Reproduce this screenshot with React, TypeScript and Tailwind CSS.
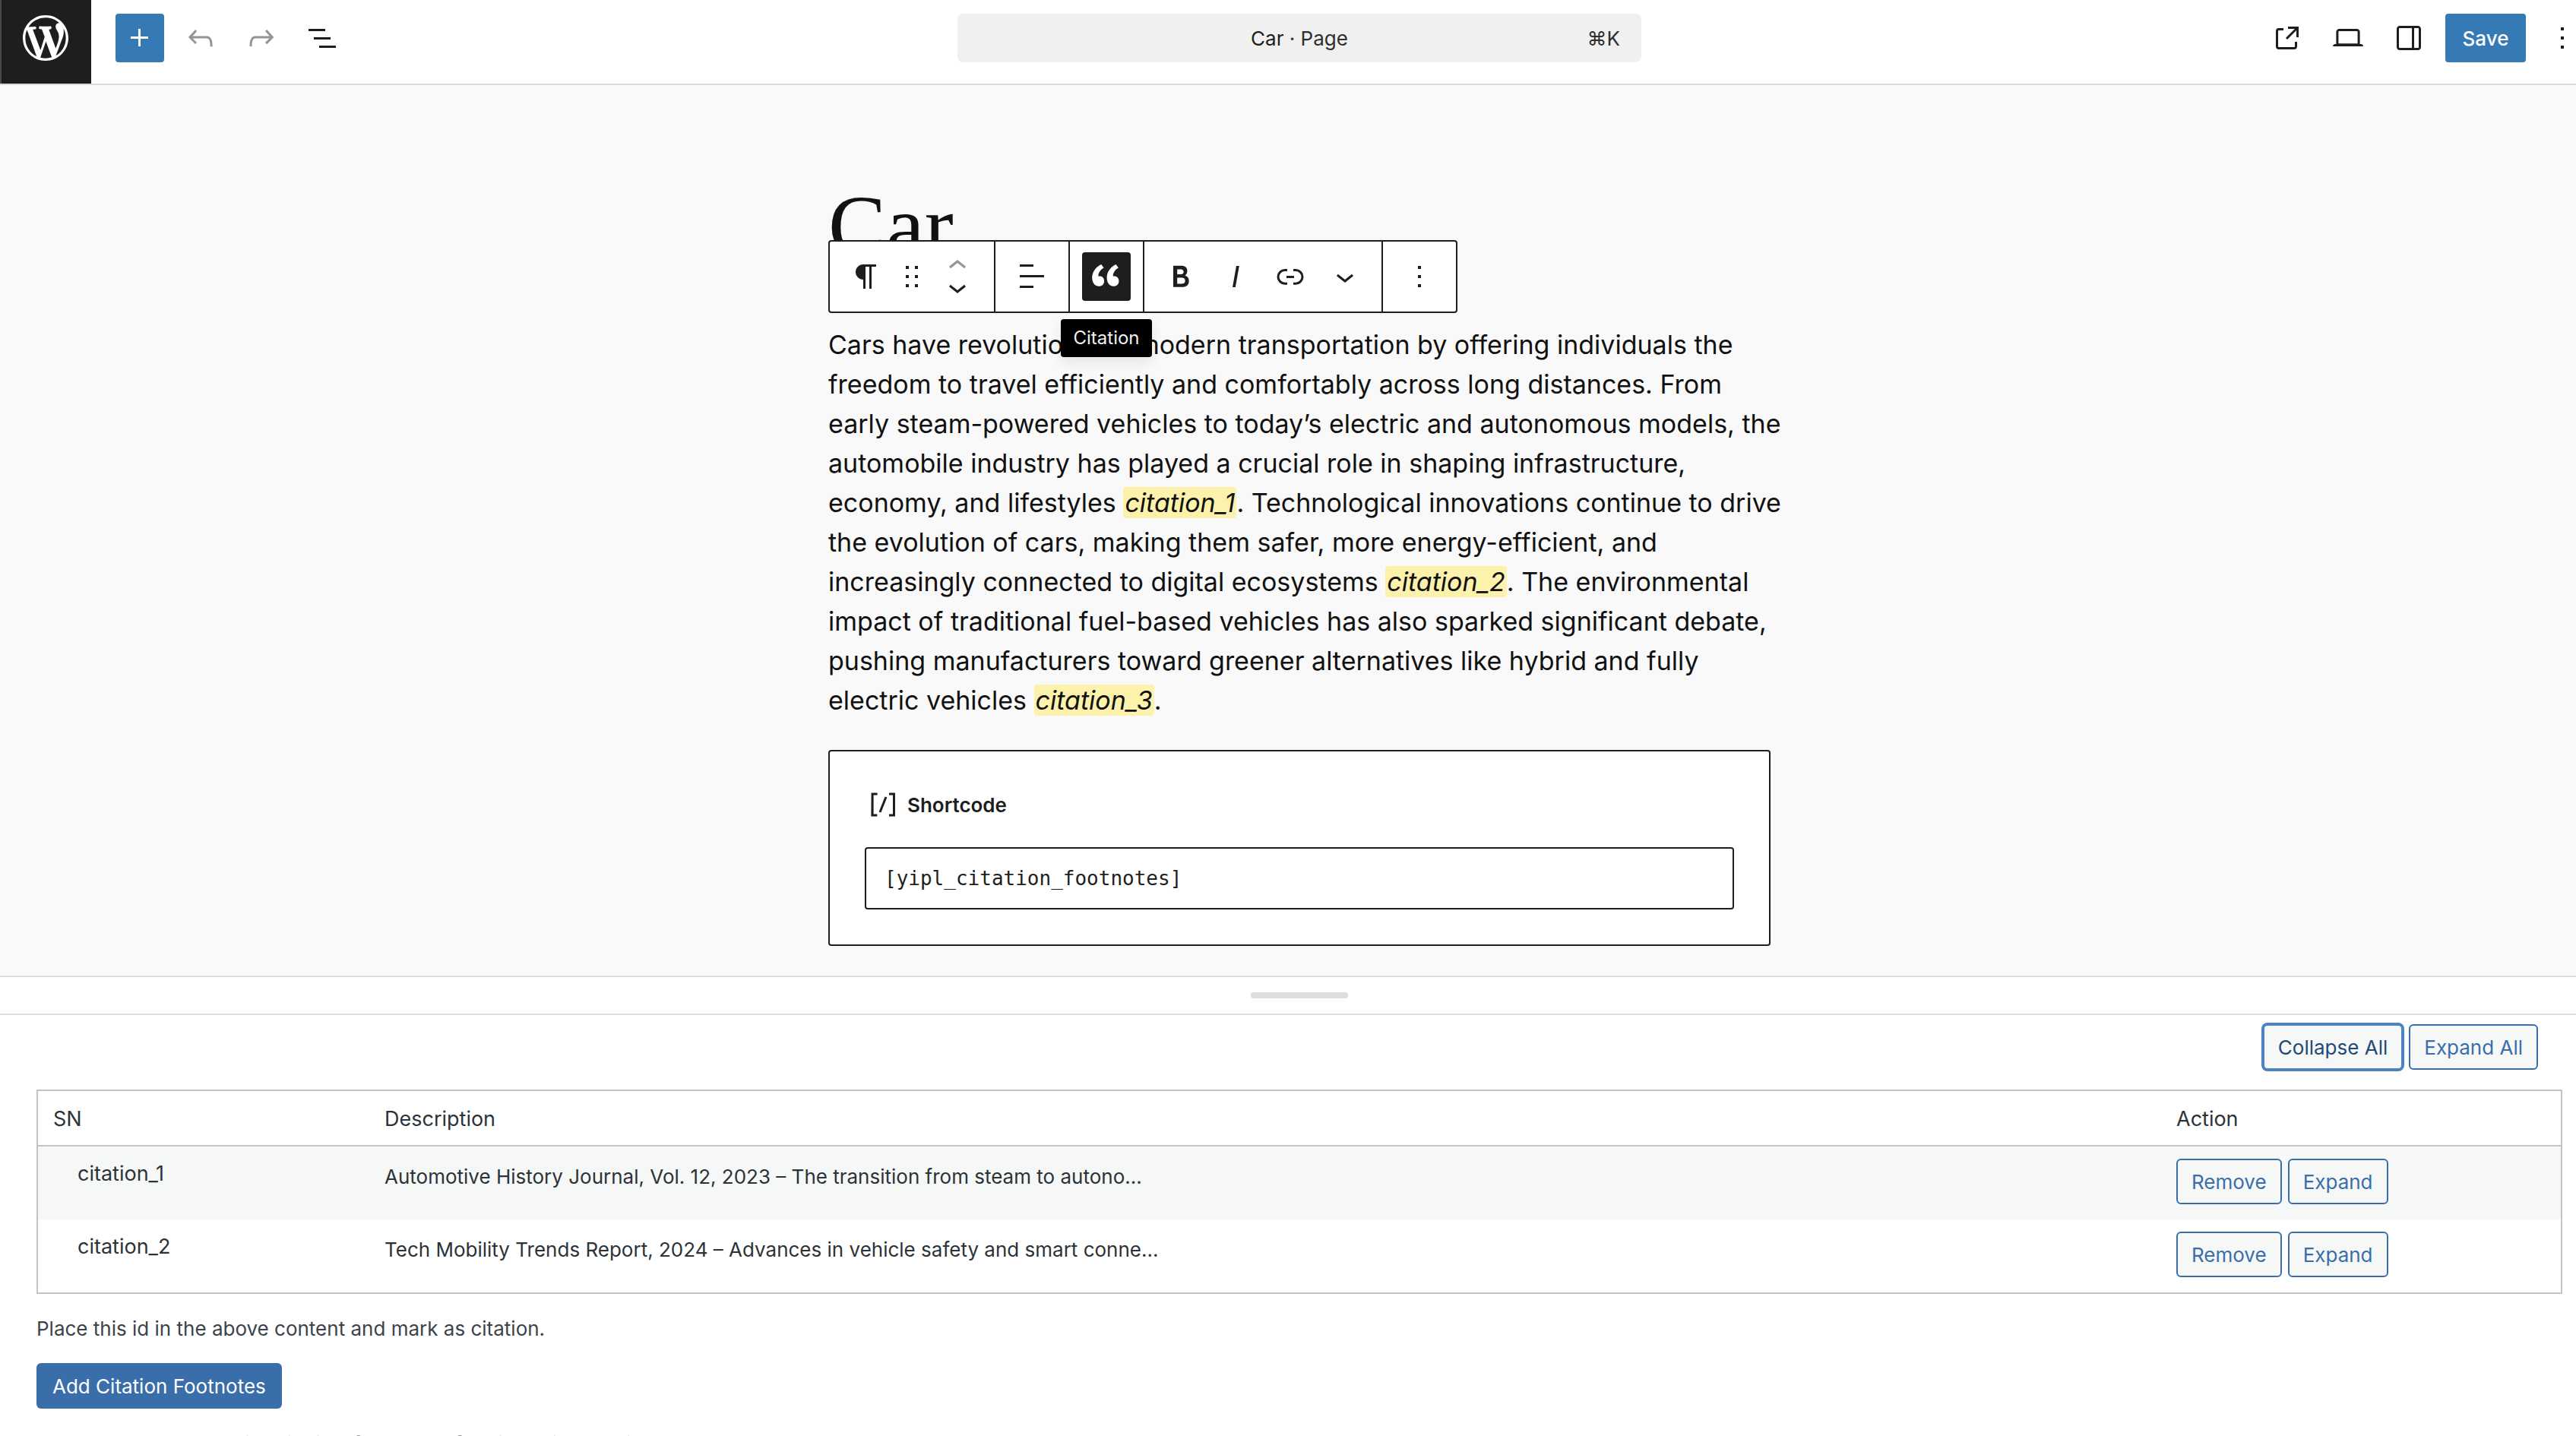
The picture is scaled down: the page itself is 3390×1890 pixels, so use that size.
import type { ReactNode } from "react";

type IconProps = { d: string; className?: string; viewBox?: string };

function Icon({ d, className = "size-12", viewBox = "0 0 24 24" }: IconProps) {
  return (
    <svg viewBox={viewBox} className={`shrink-0 fill-current ${className}`} aria-hidden="true">
      <path d={d} />
    </svg>
  );
}

const icons = {
  wordpress:
    "M20 10c0-5.51-4.49-10-10-10C4.48 0 0 4.49 0 10c0 5.52 4.48 10 10 10 5.51 0 10-4.48 10-10zM7.78 15.37L4.37 6.22c.55-.02 1.17-.08 1.17-.08.5-.06.44-1.13-.06-1.11 0 0-1.45.11-2.37.11-.18 0-.37 0-.58-.01C4.12 2.69 6.87 1.11 10 1.11c2.33 0 4.45.87 6.05 2.34-.68-.11-1.65.39-1.65 1.58 0 .74.45 1.36.9 2.1.35.61.55 1.36.55 2.46 0 1.49-1.4 5-1.4 5l-3.03-8.37c.54-.02.82-.17.82-.17.5-.05.44-1.25-.06-1.22 0 0-1.44.12-2.38.12-.87 0-2.33-.12-2.33-.12-.5-.03-.56 1.2-.06 1.22l.92.08 1.26 3.41zM17.41 10c.24-.64.74-1.87.43-4.25.7 1.29 1.05 2.71 1.05 4.25 0 3.29-1.73 6.24-4.4 7.78.97-2.59 1.94-5.2 2.92-7.78zM6.1 18.09C3.12 16.65 1.11 13.53 1.11 10c0-1.3.23-2.48.72-3.59C3.25 10.3 4.67 14.2 6.1 18.09zm4.03-6.63l2.58 6.98c-.86.29-1.76.45-2.71.45-.79 0-1.57-.11-2.29-.33.81-2.38 1.62-4.74 2.42-7.1z",
  plus: "M11 12.5V17.5H12.5V12.5H17.5V11H12.5V6H11V11H6V12.5H11Z",
  undo: "M18.3 11.7c-.6-.6-1.4-.9-2.3-.9H6.7l2.9-3.3-1.1-1-4.5 5L8.5 16l1-1-2.7-2.7H16c.5 0 .9.2 1.3.5 1 1 1 3.4 1 4.5v.3h1.5v-.2c0-1.5 0-4.3-1.5-5.7z",
  redo: "M15.6 6.5l-1.1 1 2.9 3.3H8c-.9 0-1.7.3-2.3.9-1.4 1.5-1.4 4.2-1.4 5.6v.2h1.5v-.3c0-1.1 0-3.5 1-4.5.3-.3.7-.5 1.3-.5h9.2L14.5 15l1.1 1.1 4.6-4.6-4.6-5z",
  listView: "M3 6h11v1.5H3V6Zm3.5 5.5h11V13h-11v-1.5ZM21 17H10v1.5h11V17Z",
  external:
    "M19.5 4.5h-7V6h4.44l-5.97 5.97 1.06 1.06L18 7.06v4.44h1.5v-7Zm-13 1a2 2 0 0 0-2 2v10a2 2 0 0 0 2 2h10a2 2 0 0 0 2-2v-3H17v3a.5.5 0 0 1-.5.5h-10a.5.5 0 0 1-.5-.5v-10a.5.5 0 0 1 .5-.5h3V5.5h-3Z",
  desktop:
    "M20.5 16h-.7V8c0-1.1-.9-2-2-2H6.2c-1.1 0-2 .9-2 2v8h-.7c-.8 0-1.5.7-1.5 1.5h20c0-.8-.7-1.5-1.5-1.5zM5.7 8c0-.3.2-.5.5-.5h11.6c.3 0 .5.2.5.5v7.6H5.7V8z",
  drawer:
    "M18 4H6c-1.1 0-2 .9-2 2v12c0 1.1.9 2 2 2h12c1.1 0 2-.9 2-2V6c0-1.1-.9-2-2-2zm-4 14.5H6c-.3 0-.5-.2-.5-.5V6c0-.3.2-.5.5-.5h8v13zm4.5-.5c0 .3-.2.5-.5.5h-2.5v-13H18c.3 0 .5.2.5.5v12z",
  more: "M13 19h-2v-2h2v2zm0-6h-2v-2h2v2zm0-6h-2V5h2v2z",
  paragraph:
    "m9.99609 14v-.2251l.00391.0001v6.225h1.5v-14.5h2.5v14.5h1.5v-14.5h3v-1.5h-8.50391c-2.76142 0-5 2.23858-5 5 0 2.7614 2.23858 5 5 5z",
  drag: "M8 7h2V5H8v2zm0 6h2v-2H8v2zm0 6h2v-2H8v2zm6-14v2h2V5h-2zm0 8h2v-2h-2v2zm0 6h2v-2h-2v2z",
  chevronUp: "M6.5 12.4L12 8l5.5 4.4-.9 1.2L12 10l-4.5 3.6-1-1.2z",
  chevronDown: "M17.5 11.6L12 16l-5.5-4.4.9-1.2L12 14l4.5-3.6 1 1.2z",
  align: "M13 5.5H4V4h9v1.5Zm7 7H4V11h16v1.5Zm-7 7H4V18h9v1.5Z",
  quote:
    "M9.49 13.22c0-.74-.2-1.38-.61-1.9-.62-.78-1.83-.88-2.53-.72-.29-1.65 1.11-3.75 2.92-4.65L7.88 4c-2.73 1.3-5.42 4.28-4.96 8.05C3.21 14.43 4.59 16 6.54 16c.85 0 1.56-.25 2.12-.75s.83-1.18.83-2.03zm8.05 0c0-.74-.2-1.38-.61-1.9-.63-.78-1.83-.88-2.53-.72-.29-1.65 1.11-3.75 2.92-4.65L15.93 4c-2.73 1.3-5.41 4.28-4.95 8.05.28 2.38 1.66 3.95 3.61 3.95.85 0 1.56-.25 2.12-.75s.83-1.18.83-2.03z",
  bold: "M14.7 11.3c1-.6 1.5-1.6 1.5-3 0-2.3-1.3-3.4-4-3.4H7v14h5.8c1.4 0 2.5-.3 3.3-1 .8-.7 1.2-1.7 1.2-2.9.1-1.9-.8-3.1-2.6-3.7zm-5.1-4h2.3c.6 0 1.1.1 1.4.4.3.3.5.7.5 1.2s-.2 1-.5 1.2c-.3.3-.8.4-1.4.4H9.6V7.3zm4.6 9c-.4.3-1 .4-1.7.4H9.6v-3.9h2.9c.7 0 1.3.2 1.7.5.4.3.6.8.6 1.5s-.2 1.2-.6 1.5z",
  italic: "M12.5 5L10 19h1.9l2.5-14z",
  link: "M10 17.389H8.444A5.194 5.194 0 1 1 8.444 7H10v1.5H8.444a3.694 3.694 0 0 0 0 7.389H10v1.5ZM14 7h1.556a5.194 5.194 0 0 1 0 10.39H14v-1.5h1.556a3.694 3.694 0 0 0 0-7.39H14V7Zm-4.5 6h5v-1.5h-5V13Z",
  shortcode:
    "M16 4.2v1.5h2.5v12.5H16v1.5h4V4.2h-4zM4.2 19.8h4v-1.5H5.8V5.8h2.5V4.2h-4l-.1 15.6zm5.1-3.1l1.4.6 4-10-1.4-.6-4 10z",
};

function HeaderButton({ label, d, className = "" }: { label: string; d: string; className?: string }) {
  return (
    <button type="button" aria-label={label} className={`flex size-16 items-center justify-center rounded ${className}`}>
      <Icon d={d} />
    </button>
  );
}

function Header() {
  return (
    <header className="grid shrink-0 grid-cols-[calc(50%-435px)_900px_1fr] items-center border-b-2 border-[#d9d9d9] bg-white">
      <div className="flex items-center">
        <a
          href="#dashboard"
          aria-label="View pages"
          className="flex h-[110px] w-[120px] justify-center bg-[#1e1e1e] pt-3.5 text-white shadow-[inset_2px_0_0_#4a4a4a]"
        >
          <Icon d={icons.wordpress} viewBox="-2 -2 24 24" className="size-18" />
        </a>
        <div className="mb-2.5 ml-8 flex gap-4">
          <HeaderButton label="Block inserter" d={icons.plus} className="bg-[#3579b5] text-white" />
          <HeaderButton label="Undo" d={icons.undo} className="text-[#949494]" />
          <HeaderButton label="Redo" d={icons.redo} className="text-[#949494]" />
          <HeaderButton label="Document overview" d={icons.listView} />
        </div>
      </div>
      <button
        type="button"
        className="mb-2.5 grid h-16 grid-cols-[1fr_auto_1fr] items-center rounded-lg bg-[#f0f0f0] px-7 text-[26px] text-[#2f2f2f]"
      >
        <span className="col-start-2">
          <span className="text-[#1e1e1e]">Car</span> · Page
        </span>
        <span className="justify-self-end">⌘K</span>
      </button>
      <div className="mb-2.5 flex justify-end gap-4">
        <HeaderButton label="View page" d={icons.external} />
        <HeaderButton label="Preview" d={icons.desktop} />
        <HeaderButton label="Settings" d={icons.drawer} />
        <button type="button" className="h-16 w-[106px] rounded bg-[#3579b5] text-[26px] font-medium text-white">
          Save
        </button>
        <button type="button" aria-label="Options" className="flex h-16 w-[50px] items-center justify-end">
          <Icon d={icons.more} viewBox="3 0 18 24" className="h-12 w-9" />
        </button>
      </div>
    </header>
  );
}

function ToolbarGroup({ children }: { children: ReactNode }) {
  return <div className="flex items-center border-r-2 border-[#1e1e1e] px-3 last:border-r-0">{children}</div>;
}

function ToolbarButton({ label, d }: { label: string; d: string }) {
  return (
    <button type="button" aria-label={label} className="flex h-16 w-18 items-center justify-center">
      <Icon d={d} />
    </button>
  );
}

function BlockToolbar() {
  return (
    <div
      role="toolbar"
      aria-label="Block tools"
      className="absolute bottom-full left-0 z-10 mb-4 flex h-24 rounded border-2 border-[#1e1e1e] bg-white text-[#1e1e1e]"
    >
      <ToolbarGroup>
        <ToolbarButton label="Paragraph" d={icons.paragraph} />
        <button type="button" aria-label="Drag" className="w-12">
          <Icon d={icons.drag} />
        </button>
        <div className="flex w-18 flex-col items-center">
          <button type="button" aria-label="Move up" className="flex h-7 items-center text-[#949494]">
            <Icon d={icons.chevronUp} />
          </button>
          <button type="button" aria-label="Move down" className="flex h-7 items-center">
            <Icon d={icons.chevronDown} />
          </button>
        </div>
      </ToolbarGroup>
      <ToolbarGroup>
        <ToolbarButton label="Align text" d={icons.align} />
      </ToolbarGroup>
      <ToolbarGroup>
        <div className="relative flex w-18 justify-center">
          <button
            type="button"
            aria-label="Citation"
            aria-pressed="true"
            aria-describedby="citation-tooltip"
            className="flex size-16 items-center justify-center rounded bg-[#1e1e1e] text-white"
          >
            <Icon d={icons.quote} viewBox="0.7 0.7 20 20" />
          </button>
          <div
            id="citation-tooltip"
            role="tooltip"
            className="absolute top-full mt-6 rounded bg-black px-4 py-2 text-2xl leading-[34px] text-[#f0f0f0] shadow-[0_8px_16px_rgba(0,0,0,0.08)]"
          >
            Citation
          </div>
        </div>
      </ToolbarGroup>
      <ToolbarGroup>
        <ToolbarButton label="Bold" d={icons.bold} />
        <ToolbarButton label="Italic" d={icons.italic} />
        <ToolbarButton label="Link" d={icons.link} />
        <ToolbarButton label="More formatting" d={icons.chevronDown} />
      </ToolbarGroup>
      <ToolbarGroup>
        <ToolbarButton label="Options" d={icons.more} />
      </ToolbarGroup>
    </div>
  );
}

function Citation({ children }: { children: ReactNode }) {
  return <em className="rounded bg-[#fdf2ab] px-0.5">{children}</em>;
}

function Canvas() {
  return (
    <main className="shrink-0 bg-[#f9f9f9] pt-[122px] pb-[39px] pl-[30px]">
      <article className="mx-auto w-full max-w-[1240px] text-[#111111]">
        <h1 className="font-['Liberation_Serif',serif] text-[114px] leading-[128px]">Car</h1>
        <div className="relative mt-[66px]">
          <BlockToolbar />
          <p className="-mr-5 text-[34px] leading-[52px]">
            Cars have revolutionized modern transportation by offering individuals the freedom to travel efficiently and
            comfortably across long distances. From early steam-powered vehicles to today’s electric and autonomous
            models, the automobile industry has played a crucial role in shaping infrastructure, economy, and lifestyles{" "}
            <Citation>citation_1</Citation>. Technological innovations continue to drive the evolution of cars, making
            them safer, more energy-efficient, and increasingly connected to digital ecosystems{" "}
            <Citation>citation_2</Citation>. The environmental impact of traditional fuel-based vehicles has also
            sparked significant debate, pushing manufacturers toward greener alternatives like hybrid and fully electric
            vehicles <Citation>citation_3</Citation>.
          </p>
        </div>
        <div className="mt-[39px] rounded border-2 border-[#1e1e1e] bg-white p-[46px] text-[#1e1e1e]">
          <label htmlFor="shortcode" className="flex items-center gap-2 text-[26px] font-semibold">
            <Icon d={icons.shortcode} />
            Shortcode
          </label>
          <input
            id="shortcode"
            type="text"
            defaultValue="[yipl_citation_footnotes]"
            className="mt-8 block h-[82px] w-full rounded border-2 border-[#1e1e1e] bg-white px-6 font-['DejaVu_Sans_Mono',monospace] text-[26px]"
          />
        </div>
      </article>
    </main>
  );
}

function OutlineButton({ children, focused = false }: { children: ReactNode; focused?: boolean }) {
  return (
    <button
      type="button"
      className={`h-15 rounded-md border-2 bg-[#f6f7f7] px-[18px] text-[26px] ${
        focused ? "border-[#4f82c2] text-[#1f4a75] ring-2 ring-[#4f82c2]" : "border-[#3a6eab] text-[#3a6eab]"
      }`}
    >
      {children}
    </button>
  );
}

const rows = [
  { id: "citation_1", text: "Automotive History Journal, Vol. 12, 2023 – The transition from steam to autono..." },
  { id: "citation_2", text: "Tech Mobility Trends Report, 2024 – Advances in vehicle safety and smart conne..." },
];

function CitationsPanel() {
  return (
    <section className="flex-1 bg-white">
      <div className="flex h-[52px] items-center justify-center border-y-2 border-[#dddddd] pl-[30px]">
        <button type="button" aria-label="Resize panel" className="h-2 w-32 rounded bg-[#dddddd]" />
      </div>
      <div className="pt-3 pr-[18px] pl-12 text-[26px]">
        <div className="mr-8 flex justify-end gap-2">
          <OutlineButton focused>Collapse All</OutlineButton>
          <OutlineButton>Expand All</OutlineButton>
        </div>
        <table className="mt-[26px] w-full table-fixed border-separate border-spacing-0 border-2 border-[#c3c4c7] text-left text-[#2c3338]">
          <colgroup>
            <col className="w-[436px]" />
            <col />
            <col className="w-[526px]" />
          </colgroup>
          <thead>
            <tr className="h-[73px] text-[27px]">
              <th className="border-b-2 border-[#c3c4c7] px-5 pt-1 font-normal">SN</th>
              <th className="border-b-2 border-[#c3c4c7] px-5 pt-1 font-normal">Description</th>
              <th className="border-b-2 border-[#c3c4c7] px-5 pt-1 font-normal">Action</th>
            </tr>
          </thead>
          <tbody className="align-top">
            {rows.map((row) => (
              <tr key={row.id} className="odd:bg-[#f6f7f7]">
                <td className="pt-4 pl-[52px] text-[27px] leading-10">{row.id}</td>
                <td className="px-5 pt-5 leading-10">{row.text}</td>
                <td className="px-5 pt-4 pb-5">
                  <div className="flex gap-2">
                    <OutlineButton>Remove</OutlineButton>
                    <OutlineButton>Expand</OutlineButton>
                  </div>
                </td>
              </tr>
            ))}
          </tbody>
        </table>
        <p className="mt-[26px] leading-[39px] text-[#3c434a]">
          Place this id in the above content and mark as citation.
        </p>
        <button type="button" className="mt-[26px] block h-15 rounded-md bg-[#3a6eab] px-[21px] text-white">
          Add Citation Footnotes
        </button>
        <p className="mt-[27px] leading-[39px] text-[#8c8f94]">
          Copy the shortcode [yipl_citation_footnotes] for displaying the list
        </p>
      </div>
    </section>
  );
}

export default function App() {
  return (
    <div className="flex h-screen flex-col overflow-hidden bg-white font-['Inter','DejaVu_Sans',sans-serif] text-[#1e1e1e]">
      <Header />
      <Canvas />
      <CitationsPanel />
    </div>
  );
}
